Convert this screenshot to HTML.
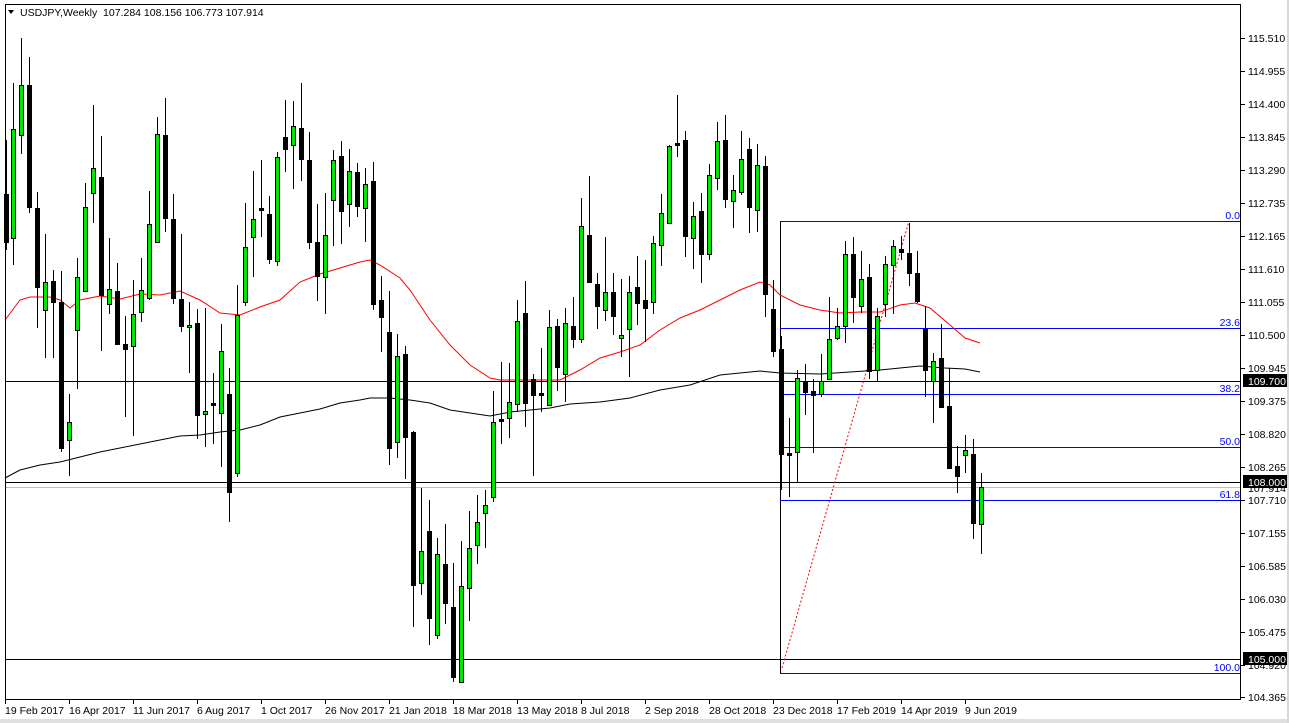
<!DOCTYPE html>
<html><head><meta charset="utf-8"><style>
html,body{margin:0;padding:0;background:#fff;}
svg{display:block;font-family:"Liberation Sans",sans-serif;}
text{font-size:10.5px;}
</style></head><body>
<svg width="1289" height="723" viewBox="0 0 1289 723" xmlns="http://www.w3.org/2000/svg">
<rect width="1289" height="723" fill="#fff"/>
<rect x="0" y="719" width="1289" height="4" fill="#e0e0e0"/>
<rect x="1287" y="0" width="2" height="723" fill="#d8d8d8"/>
<line x1="5" y1="381.5" x2="1241" y2="381.5" stroke="#000"/>
<line x1="5" y1="482.5" x2="1241" y2="482.5" stroke="#000"/>
<line x1="5" y1="487.5" x2="1241" y2="487.5" stroke="#c0c0c0"/>
<line x1="5" y1="659.5" x2="1241" y2="659.5" stroke="#000"/>
<line x1="780.5" y1="221" x2="780.5" y2="673" stroke="#000"/>
<path d="M780 221.5H1241M780 328.5H1241M780 394.5H1241M780 447.5H1241M780 500.5H1241M780 673.5H1241" stroke="#0000ff" stroke-width="1" fill="none"/>
<g fill="#0000ff" text-anchor="end">
<text x="1240" y="219">0.0</text>
<text x="1240" y="326">23.6</text>
<text x="1240" y="392">38.2</text>
<text x="1240" y="445">50.0</text>
<text x="1240" y="498">61.8</text>
<text x="1240" y="671">100.0</text>
</g>
<line x1="782" y1="668" x2="909" y2="221" stroke="#ff0000" stroke-dasharray="2,2"/>
<polyline fill="none" stroke="#ff0000" points="5,320 20,300 30,297 50,297 60,300 70,308 80,300 100,296 120,299 140,294 160,295 180,291 200,300 220,313 240,315 260,307 280,300 300,282 320,274 340,268 360,262 370,260 380,265 400,278 410,290 430,320 450,345 470,365 490,378 500,380 530,380 560,380 580,370 600,358 620,352 640,345 660,330 680,318 700,310 720,300 740,290 760,282 770,285 780,295 800,305 820,310 840,313 860,312 880,312 900,305 915,303 930,308 950,325 965,338 980,343"/>
<polyline fill="none" stroke="#000" points="5,478 20,470 40,465 60,462 80,457 100,452 120,448 140,444 160,440 180,436 200,435 220,432 240,430 260,425 280,417 300,413 320,409 340,403 360,400 370,398 390,398 410,400 430,403 450,410 470,413 490,416 510,412 530,410 550,408 570,404 600,402 630,398 660,390 690,385 720,375 760,371 780,373 820,374 850,372 880,370 900,368 920,366 945,368 965,369 980,372"/>
<path fill="none" stroke="#000" stroke-width="1" d="M6.5 140V250M13.5 83V265M21.5 38V154M29.5 57V213M37.5 192V328M45.5 234V358M53.5 270V358M61.5 271V452M69.5 394V476M77.5 258V389M85.5 183V292M93.5 105V223M101.5 136V351M109.5 238V314M117.5 263V345M125.5 316V417M133.5 280V436M141.5 258V322M149.5 191V300M157.5 117V243M165.5 98V232M173.5 194V304M181.5 234V332M189.5 302V373M197.5 309V439M205.5 308V447M213.5 373V444M221.5 324V467M229.5 368V522M237.5 285V477M245.5 203V306M253.5 171V277M261.5 160V237M269.5 196V264M277.5 152V266M285.5 100V172M293.5 101V189M301.5 83V181M309.5 132V249M317.5 204V301M325.5 193V314M333.5 150V246M341.5 141V244M349.5 149V227M357.5 163V217M365.5 168V242M373.5 162V310M381.5 276V352M389.5 291V465M397.5 334V458M405.5 346V479M413.5 431V627M421.5 488V595M429.5 500V645M437.5 538V639M445.5 524V624M453.5 563V682M461.5 541V683M469.5 511V621M477.5 495V564M485.5 490V548M493.5 391V502M501.5 362V444M509.5 363V438M517.5 300V412M525.5 281V427M533.5 374V476M541.5 348V412M549.5 310V406M557.5 319V391M565.5 308V402M573.5 297V348M581.5 198V343M589.5 176V283M597.5 273V329M605.5 237V321M613.5 273V335M621.5 279V357M629.5 276V377M637.5 256V325M645.5 260V342M653.5 236V314M661.5 194V266M669.5 145V224M677.5 95V157M685.5 131V257M693.5 202V269M701.5 193V283M709.5 164V260M717.5 122V190M725.5 115V208M733.5 175V228M741.5 131V195M749.5 138V233M757.5 144V232M765.5 156V317M773.5 280V357M781.5 336V490M789.5 418V497M797.5 370V483M805.5 364V415M813.5 379V453M821.5 354V397M829.5 297V379M837.5 308V340M845.5 241V343M853.5 237V323M861.5 251V313M869.5 264V379M877.5 308V382M885.5 256V317M893.5 240V314M901.5 236V260M909.5 223V286M917.5 251V303M925.5 306V397M933.5 353V423M941.5 324V408M949.5 368V468M957.5 446V493M965.5 435V473M973.5 439V539M981.5 473V554"/>
<path fill="none" stroke="#000" stroke-width="5" d="M6.5 194V243M29.5 85V208M37.5 208V288M53.5 281V303M61.5 302V449M101.5 177V296M117.5 291V345M125.5 344V350M165.5 135V219M173.5 219V299M181.5 299V327M197.5 323V416M213.5 403V406M229.5 394V493M261.5 208V211M269.5 214V260M285.5 137V150M301.5 128V160M309.5 160V243M317.5 242V277M341.5 156V212M357.5 172V207M373.5 181V305M381.5 300V318M389.5 332V449M405.5 354V438M413.5 432V586M429.5 531V619M445.5 564V604M453.5 607V678M501.5 419V422M525.5 313V404M533.5 379V396M541.5 393V396M557.5 326V368M573.5 326V340M589.5 235V283M597.5 284V307M613.5 292V317M637.5 287V304M645.5 300V309M677.5 143V146M685.5 140V237M701.5 211V255M725.5 140V200M749.5 149V208M765.5 166V295M773.5 309V352M781.5 349V455M789.5 453V456M805.5 382V393M813.5 391V396M853.5 254V298M869.5 277V372M901.5 249V253M909.5 253V274M917.5 273V302M925.5 329V371M941.5 358V408M949.5 406V469M957.5 466V477M973.5 454V524"/>
<g fill="#00e600" stroke="#000" stroke-width="1">
<rect x="11.5" y="129.5" width="4" height="109"/><rect x="19.5" y="85.5" width="4" height="50"/><rect x="43.5" y="282.5" width="4" height="28"/><rect x="67.5" y="422.5" width="4" height="18"/><rect x="75.5" y="277.5" width="4" height="53"/><rect x="83.5" y="207.5" width="4" height="84"/><rect x="91.5" y="168.5" width="4" height="25"/><rect x="107.5" y="289.5" width="4" height="15"/><rect x="131.5" y="314.5" width="4" height="32"/><rect x="139.5" y="290.5" width="4" height="22"/><rect x="147.5" y="224.5" width="4" height="74"/><rect x="155.5" y="134.5" width="4" height="108"/><rect x="187.5" y="325.5" width="4" height="2"/><rect x="203.5" y="411.5" width="4" height="3"/><rect x="219.5" y="351.5" width="4" height="62"/><rect x="235.5" y="315.5" width="4" height="158"/><rect x="243.5" y="247.5" width="4" height="55"/>
<rect x="251.5" y="219.5" width="4" height="18"/><rect x="275.5" y="157.5" width="4" height="104"/><rect x="291.5" y="126.5" width="4" height="19"/><rect x="323.5" y="235.5" width="4" height="42"/><rect x="331.5" y="160.5" width="4" height="40"/><rect x="347.5" y="171.5" width="4" height="33"/><rect x="363.5" y="184.5" width="4" height="24"/><rect x="395.5" y="356.5" width="4" height="86"/><rect x="419.5" y="551.5" width="4" height="32"/><rect x="435.5" y="554.5" width="4" height="81"/><rect x="459.5" y="586.5" width="4" height="96"/><rect x="467.5" y="548.5" width="4" height="40"/><rect x="475.5" y="522.5" width="4" height="23"/><rect x="483.5" y="505.5" width="4" height="8"/><rect x="491.5" y="422.5" width="4" height="75"/>
<rect x="507.5" y="402.5" width="4" height="16"/><rect x="515.5" y="321.5" width="4" height="83"/><rect x="547.5" y="327.5" width="4" height="78"/><rect x="563.5" y="323.5" width="4" height="51"/><rect x="579.5" y="226.5" width="4" height="113"/><rect x="603.5" y="292.5" width="4" height="18"/><rect x="619.5" y="335.5" width="4" height="3"/><rect x="627.5" y="292.5" width="4" height="37"/><rect x="651.5" y="243.5" width="4" height="59"/><rect x="659.5" y="213.5" width="4" height="32"/><rect x="667.5" y="146.5" width="4" height="77"/><rect x="691.5" y="216.5" width="4" height="22"/><rect x="707.5" y="175.5" width="4" height="79"/><rect x="715.5" y="141.5" width="4" height="37"/><rect x="731.5" y="190.5" width="4" height="11"/><rect x="739.5" y="159.5" width="4" height="33"/>
<rect x="755.5" y="165.5" width="4" height="45"/><rect x="795.5" y="378.5" width="4" height="74"/><rect x="819.5" y="381.5" width="4" height="13"/><rect x="827.5" y="339.5" width="4" height="40"/><rect x="835.5" y="326.5" width="4" height="12"/><rect x="843.5" y="254.5" width="4" height="72"/><rect x="859.5" y="279.5" width="4" height="27"/><rect x="875.5" y="316.5" width="4" height="54"/><rect x="883.5" y="264.5" width="4" height="40"/><rect x="891.5" y="246.5" width="4" height="19"/><rect x="931.5" y="361.5" width="4" height="20"/><rect x="963.5" y="450.5" width="4" height="5"/><rect x="979.5" y="487.5" width="4" height="37"/>
</g>
<rect x="5.5" y="4.5" width="1235" height="695" fill="none" stroke="#000"/>
<polygon points="8,10 14,10 11,14" fill="#000"/>
<text x="20" y="16">USDJPY,Weekly&#160; 107.284 108.156 106.773 107.914</text>
<path stroke="#000" d="M1241 38.5h4M1241 71.5h4M1241 104.5h4M1241 137.5h4M1241 170.5h4M1241 203.5h4M1241 236.5h4M1241 269.5h4M1241 302.5h4M1241 335.5h4M1241 368.5h4M1241 401.5h4M1241 434.5h4M1241 467.5h4M1241 500.5h4M1241 533.5h4M1241 566.5h4M1241 599.5h4M1241 632.5h4M1241 665.5h4M1241 697.5h4"/>
<g fill="#000">
<text x="1248" y="42">115.510</text><text x="1248" y="75">114.955</text><text x="1248" y="108">114.400</text><text x="1248" y="141">113.845</text><text x="1248" y="174">113.290</text><text x="1248" y="207">112.735</text><text x="1248" y="240">112.165</text><text x="1248" y="273">111.610</text><text x="1248" y="306">111.055</text><text x="1248" y="339">110.500</text><text x="1248" y="372">109.945</text><text x="1248" y="405">109.375</text><text x="1248" y="438">108.820</text><text x="1248" y="471">108.265</text><text x="1248" y="504">107.710</text><text x="1248" y="537">107.155</text><text x="1248" y="570">106.585</text><text x="1248" y="603">106.030</text><text x="1248" y="636">105.475</text><text x="1248" y="669">104.920</text><text x="1248" y="701">104.365</text>
<text x="1248" y="492">107.914</text>
</g>
<rect x="1243" y="374" width="44" height="13" fill="#000"/><text x="1248" y="385" fill="#fff">109.700</text>
<rect x="1243" y="475" width="44" height="13" fill="#000"/><text x="1248" y="486" fill="#fff">108.000</text>
<rect x="1243" y="652" width="44" height="13" fill="#000"/><text x="1248" y="663" fill="#fff">105.000</text>
<path stroke="#000" d="M5.5 700v4M69.5 700v4M133.5 700v4M197.5 700v4M261.5 700v4M325.5 700v4M389.5 700v4M453.5 700v4M517.5 700v4M581.5 700v4M645.5 700v4M709.5 700v4M773.5 700v4M837.5 700v4M901.5 700v4M965.5 700v4"/>
<g fill="#000">
<text x="5" y="714">19 Feb 2017</text><text x="69" y="714">16 Apr 2017</text><text x="133" y="714">11 Jun 2017</text><text x="197" y="714">6 Aug 2017</text><text x="261" y="714">1 Oct 2017</text><text x="325" y="714">26 Nov 2017</text><text x="389" y="714">21 Jan 2018</text><text x="453" y="714">18 Mar 2018</text><text x="517" y="714">13 May 2018</text><text x="581" y="714">8 Jul 2018</text><text x="645" y="714">2 Sep 2018</text><text x="709" y="714">28 Oct 2018</text><text x="773" y="714">23 Dec 2018</text><text x="837" y="714">17 Feb 2019</text><text x="901" y="714">14 Apr 2019</text><text x="965" y="714">9 Jun 2019</text>
</g>
</svg>
</body></html>
